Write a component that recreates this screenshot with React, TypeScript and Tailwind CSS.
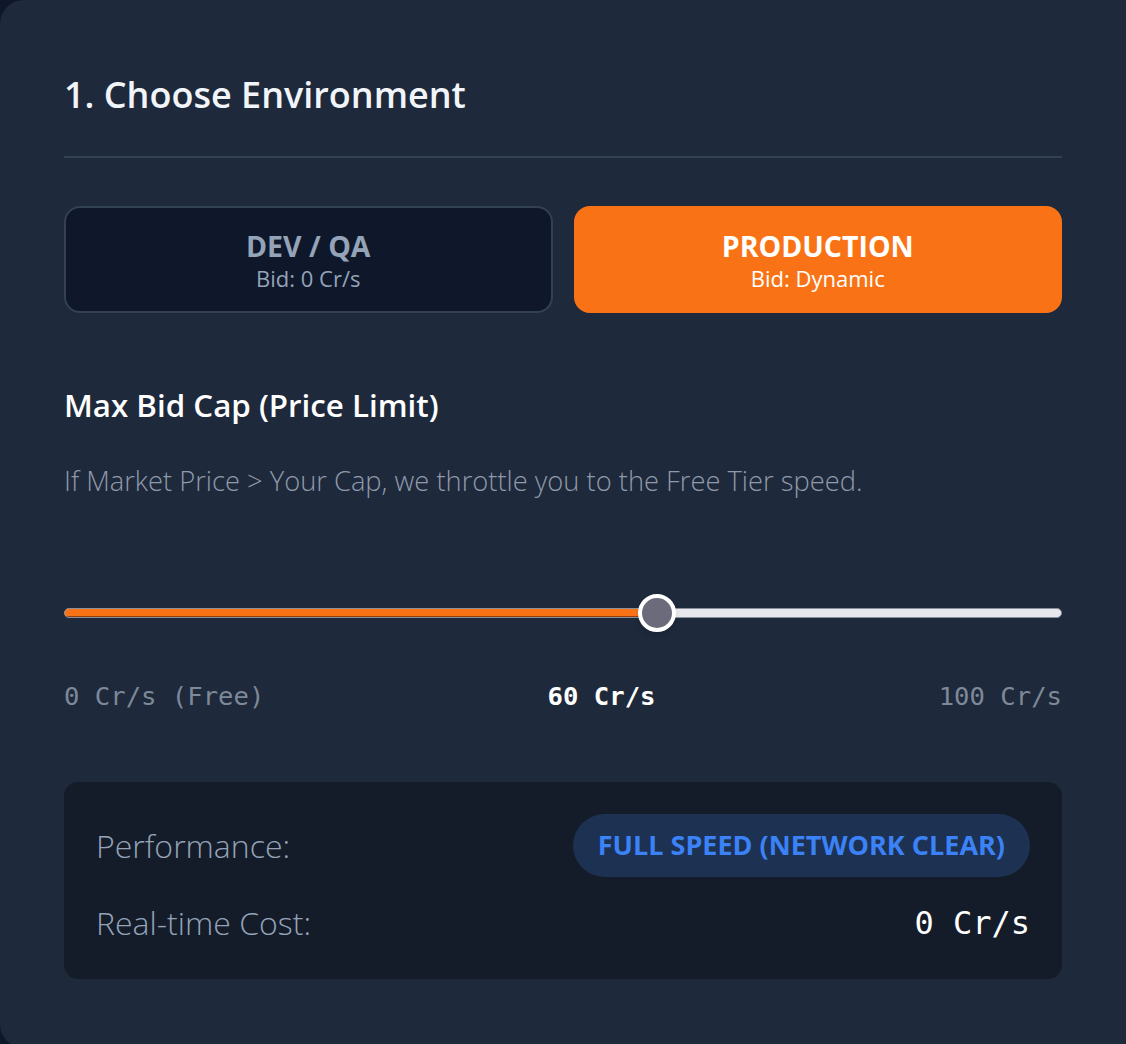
import { useState } from 'react'

const sans = "font-['Open_Sans','Noto_Sans',sans-serif]"
const mono = "font-['DejaVu_Sans_Mono','Liberation_Mono',monospace]"

type Env = 'dev' | 'prod'

function EnvButton({
  title,
  bid,
  active,
  onClick,
}: {
  title: string
  bid: string
  active: boolean
  onClick: () => void
}) {
  return (
    <button
      type="button"
      onClick={onClick}
      className={
        active
          ? 'flex h-[107px] flex-col items-center justify-center rounded-2xl border-2 border-[#f97316] bg-[#f97316] text-white'
          : 'flex h-[107px] flex-col items-center justify-center rounded-2xl border-2 border-[#334155] bg-[#0f172a] text-[#94a3b8]'
      }
    >
      <span className="text-[28.5px] leading-[36px] font-bold">{title}</span>
      <span className="text-[22px] leading-[28px] font-normal">{bid}</span>
    </button>
  )
}

export default function App() {
  const [env, setEnv] = useState<Env>('prod')
  const cap = 60
  const pct = cap

  return (
    <div className={`h-[1044px] w-[1126px] overflow-hidden bg-[#0f172a] ${sans}`}>
      <div className="min-h-[1048px] w-[1126px] rounded-l-3xl bg-[#1e293b] pt-[73px] pl-16">
        <div className="w-[998px]">
          <h2 className="border-b-2 border-[#334155] pb-[39px] text-[36px] leading-[44px] font-semibold text-[#f1f5f9]">
            1. Choose Environment
          </h2>

          <div className="mt-[48px] grid grid-cols-2 gap-[21px]">
            <EnvButton title="DEV / QA" bid="Bid: 0 Cr/s" active={env === 'dev'} onClick={() => setEnv('dev')} />
            <EnvButton title="PRODUCTION" bid="Bid: Dynamic" active={env === 'prod'} onClick={() => setEnv('prod')} />
          </div>

          <h3 className="mt-[74px] text-[31.3px] leading-[36px] font-semibold text-white">Max Bid Cap (Price Limit)</h3>
          <p className="mt-[38px] text-[27.3px] leading-[40px] font-light text-[#8f9aab]">
            If Market Price &gt; Your Cap, we throttle you to the Free Tier speed.
          </p>

          <div className="relative mt-[92px] flex h-10 items-center">
            <div className="flex h-[10px] w-full overflow-hidden rounded-full border border-[#8a8f9c] bg-[#e8e8ec]">
              <div className="h-full border-b border-[#9a3f0c] bg-[#f97316]" style={{ width: `${pct}%` }} />
            </div>
            <div
              className="absolute top-1/2 h-[38px] w-[38px] -translate-x-1/2 -translate-y-1/2 rounded-full border-[4px] border-white bg-[#6b6b7b] shadow-md"
              style={{ left: `${pct - 0.6}%` }}
            />
          </div>

          <div className={`mt-[47px] flex justify-between text-[25.6px] leading-[32px] ${mono}`}>
            <span className="text-[#7d8898]">0 Cr/s (Free)</span>
            <span className="font-bold text-white">{cap} Cr/s</span>
            <span className="text-[#7d8898]">100 Cr/s</span>
          </div>

          <div className="mt-[70px] rounded-[14px] bg-black/30 px-8 pt-8 pb-[36px]">
            <div className="flex items-center justify-between">
              <span className="text-[32px] font-light text-[#94a3b8]">Performance:</span>
              <span className="flex h-[63px] items-center rounded-full bg-[#1d3152] px-[25px] text-[27px] font-bold text-[#3b82f6]">
                FULL SPEED (NETWORK CLEAR)
              </span>
            </div>
            <div className="mt-[26px] flex items-center justify-between">
              <span className="text-[32px] leading-[40px] font-light text-[#94a3b8]">Real-time Cost:</span>
              <span className={`text-[32px] leading-[40px] text-white ${mono}`}>0 Cr/s</span>
            </div>
          </div>
        </div>
      </div>
    </div>
  )
}
